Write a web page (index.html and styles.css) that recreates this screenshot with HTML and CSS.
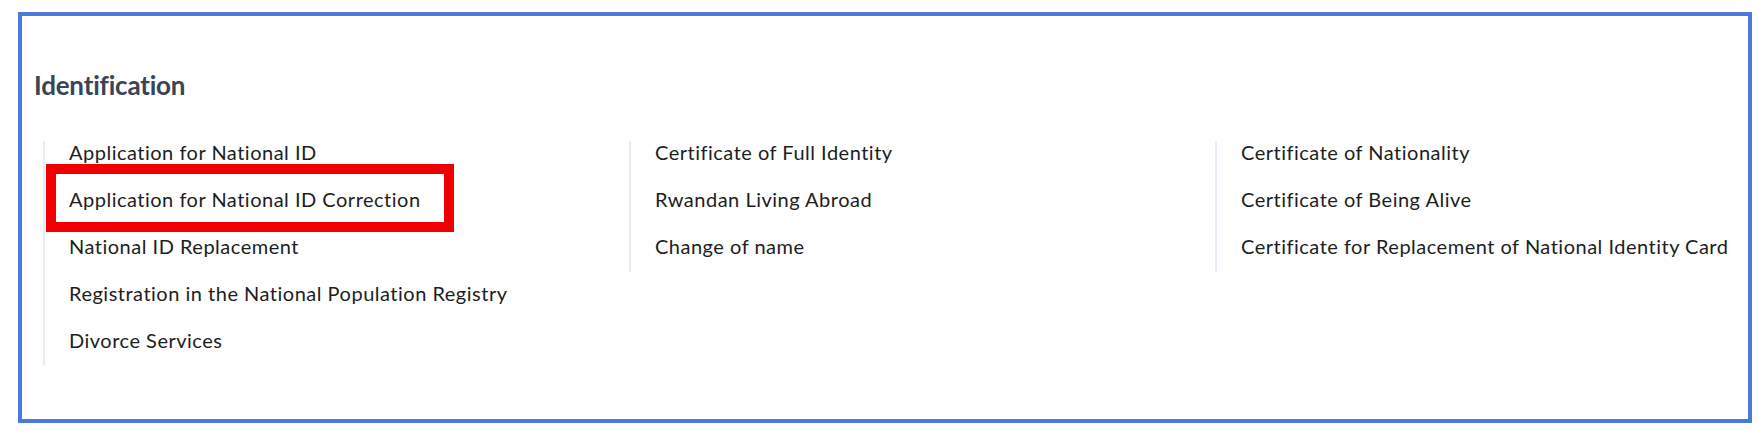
FILE: index.html
```html
<!DOCTYPE html>
<html lang="en">
<head>
  <meta charset="UTF-8" />
  <meta name="viewport" content="width=device-width, initial-scale=1" />
  <title>Identification Services</title>
  <link rel="stylesheet" href="styles.css">
</head>
<body>

  <div class="panel">
    <h2 class="category-title">Identification</h2>

    <div class="service-columns">
      <ul class="service-list">
        <li>Application for National ID</li>
        <li class="marked">Application for National ID Correction</li>
        <li>National ID Replacement</li>
        <li>Registration in the National Population Registry</li>
        <li>Divorce Services</li>
      </ul>

      <ul class="service-list">
        <li>Certificate of Full Identity</li>
        <li>Rwandan Living Abroad</li>
        <li>Change of name</li>
      </ul>

      <ul class="service-list">
        <li>Certificate of Nationality</li>
        <li>Certificate of Being Alive</li>
        <li>Certificate for Replacement of National Identity Card</li>
      </ul>
    </div>
  </div>

</body>
</html>
```

FILE: styles.css
```css
body {
  margin: 0;
  background: #fff;
  font-family: Lato, "Open Sans", sans-serif;
}

.panel {
  box-sizing: border-box;
  height: 411px;
  margin: 12px 9px 12px 18px;
  padding: 53px 0 0 12px;
  border: 4px solid #4d79dc;
}

.category-title {
  margin: 0 0 40px;
  font-size: 26px;
  line-height: 32px;
  font-weight: 700;
  letter-spacing: -0.2px;
  color: #3a4457;
}

.service-columns {
  display: grid;
  grid-template-columns: repeat(3, 586px);
  align-items: start;
  margin-left: 9px;
}

.service-list {
  list-style: none;
  margin: 0;
  padding: 0 0 0 24px;
  border-left: 2px solid #e8ebf7;
}

.service-list li {
  font-size: 20px;
  line-height: 22px;
  letter-spacing: 0.5px;
  padding-bottom: 15px;
  margin-bottom: 10px;
  color: #1c1e21;
  white-space: nowrap;
}

.service-list li:last-child {
  margin-bottom: 0;
}

/* red annotation frame drawn over the item */
.marked {
  position: relative;
}

.marked::after {
  content: "";
  position: absolute;
  left: -23px;
  top: -24px;
  width: 388px;
  height: 48px;
  border: 10px solid #ee0000;
}
```
